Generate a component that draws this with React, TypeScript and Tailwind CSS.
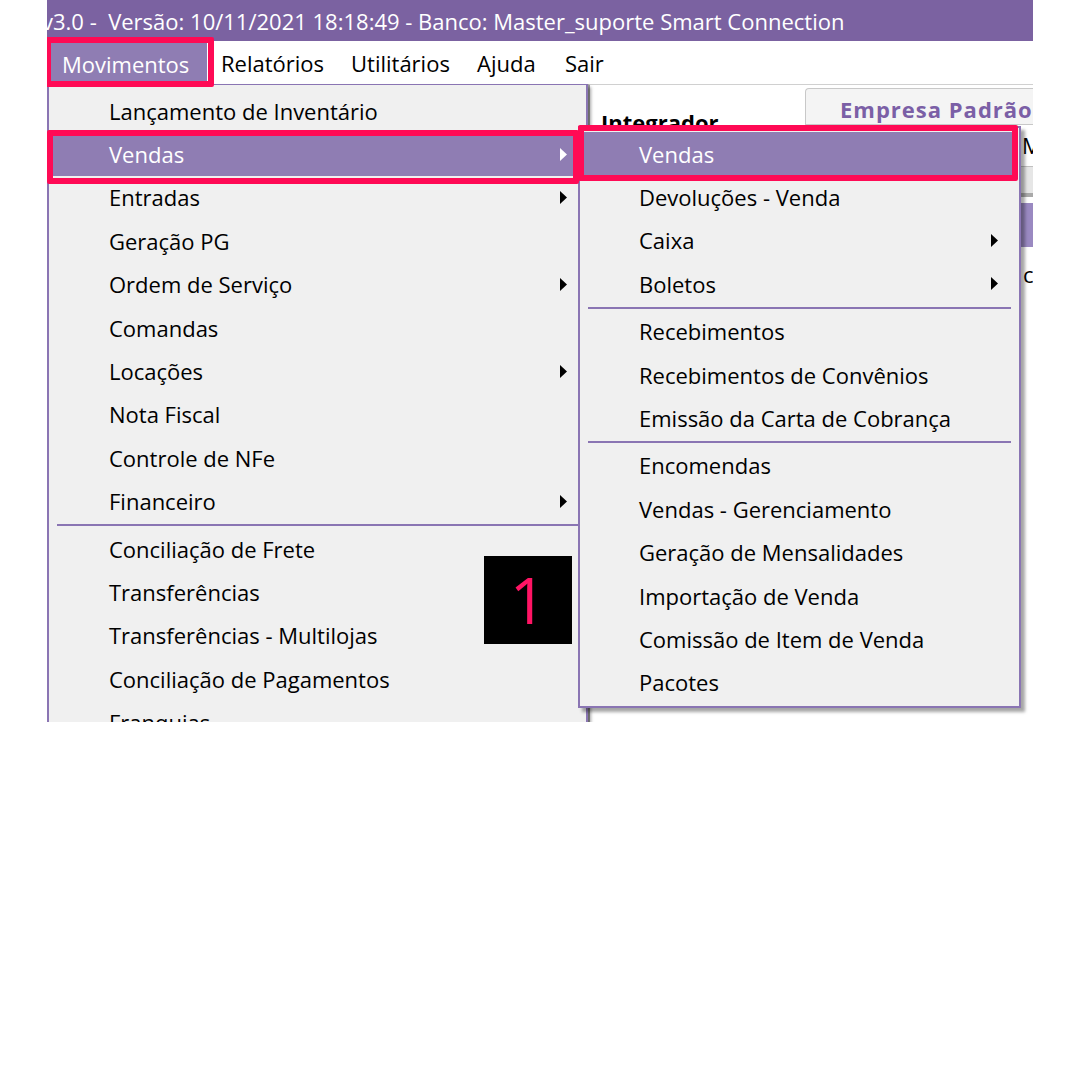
import React from "react";

const Arrow = ({ white }: { white?: boolean }) => (
  <svg width="8" height="13" viewBox="0 0 8 13" className="shrink-0">
    <path d="M0 0 L7 6.5 L0 13 Z" fill={white ? "#ffffff" : "#000000"} />
  </svg>
);

type Item = { label: string; arrow?: boolean; active?: boolean } | "sep";

const leftItems: Item[] = [
  { label: "Lançamento de Inventário" },
  { label: "Vendas", arrow: true, active: true },
  { label: "Entradas", arrow: true },
  { label: "Geração PG" },
  { label: "Ordem de Serviço", arrow: true },
  { label: "Comandas" },
  { label: "Locações", arrow: true },
  { label: "Nota Fiscal" },
  { label: "Controle de NFe" },
  { label: "Financeiro", arrow: true },
  "sep",
  { label: "Conciliação de Frete" },
  { label: "Transferências" },
  { label: "Transferências - Multilojas" },
  { label: "Conciliação de Pagamentos" },
  { label: "Franquias" },
];

const subItems: Item[] = [
  { label: "Vendas", active: true },
  { label: "Devoluções - Venda" },
  { label: "Caixa", arrow: true },
  { label: "Boletos", arrow: true },
  "sep",
  { label: "Recebimentos" },
  { label: "Recebimentos de Convênios" },
  { label: "Emissão da Carta de Cobrança" },
  "sep",
  { label: "Encomendas" },
  { label: "Vendas - Gerenciamento" },
  { label: "Geração de Mensalidades" },
  { label: "Importação de Venda" },
  { label: "Comissão de Item de Venda" },
  { label: "Pacotes" },
];

function MenuRows({ items, textLeft, arrowRight }: { items: Item[]; textLeft: string; arrowRight: string }) {
  return (
    <>
      {items.map((it, i) =>
        it === "sep" ? (
          <div key={i} className="h-[4px] flex items-center px-[8px]">
            <div className="h-[2px] w-full bg-[#8a75b3]" />
          </div>
        ) : it.active ? (
          <div key={i} className={`h-[43.4px] mx-[3px] flex items-center bg-[#8f7db3] text-white whitespace-nowrap ${textLeft} ${arrowRight}`}>
            <span className="flex-1">{it.label}</span>
            {it.arrow && <Arrow white />}
          </div>
        ) : (
          <div key={i} className={`h-[43.4px] mx-[3px] flex items-center text-black whitespace-nowrap ${textLeft} ${arrowRight}`}>
            <span className="flex-1">{it.label}</span>
            {it.arrow && <Arrow />}
          </div>
        )
      )}
    </>
  );
}

export default function App() {
  return (
    <div className="w-[1080px] h-[1080px] bg-white font-['Open_Sans',sans-serif] text-[22px]">
      <div className="ml-[47px] w-[986px] h-[722px] overflow-hidden relative bg-white">
        {/* Title bar */}
        <div className="h-[41px] bg-[#7b62a1] text-white flex items-center whitespace-pre -ml-[5px] leading-none">
          v3.0 -  Versão: 10/11/2021 18:18:49 - Banco: Master_suporte Smart Connection
        </div>
        {/* Menu bar */}
        <div className="h-[43px] bg-white flex items-stretch leading-none whitespace-nowrap">
          <div className="ml-[3px] w-[157px] pl-[12px] mt-[2px] bg-[#8f7db3] text-white flex items-center">Movimentos</div>
          <div className="w-[130px] pl-[14px] flex items-center text-black">Relatórios</div>
          <div className="w-[126px] pl-[14px] flex items-center text-black">Utilitários</div>
          <div className="w-[88px] pl-[14px] flex items-center text-black">Ajuda</div>
          <div className="w-[60px] pl-[14px] flex items-center text-black">Sair</div>
        </div>
        {/* Background window */}
        <div className="flex h-[638px]">
          <div className="w-[541px] shrink-0 bg-[#f0f0f0]" />
          <div className="flex-1 min-w-0 border-t border-[#d0d0d0] border-l-2 border-l-[#a0a0a0] bg-white flex flex-col">
            <div className="h-[40px] flex">
              <div className="pl-[11px] pt-[26px] font-bold text-[22px] leading-none text-black whitespace-nowrap">Integrador</div>
              <div className="ml-auto mt-[3px] w-[228px] shrink-0 h-[37px] rounded-tl-[4px] border border-[#c8c8c8] border-r-0 bg-[#f4f4f4] pl-[34px] pt-[9px] font-bold text-[22px] leading-none text-[#7b5fa6] tracking-[1px] whitespace-nowrap overflow-hidden">
                Empresa Padrão
              </div>
            </div>
            <div className="h-[42px] border-b border-[#c0c0c0] pl-[432px] pt-[9px] text-black whitespace-nowrap overflow-hidden leading-none">Master</div>
            <div className="h-[30px] bg-[#e6e6e6] border-b-[4px] border-[#a9a9a9]" />
            <div className="h-[6px]" />
            <div className="h-[44px] bg-[#9a89c1]" />
            <div className="h-[50px] pl-[433px] pt-[16px] text-black whitespace-nowrap overflow-hidden leading-none">cód</div>
          </div>
        </div>

        {/* Left dropdown menu */}
        <div className="absolute left-0 top-[84px] w-[541px] h-[660px] bg-[#f0f0f0] border-l-2 border-t border-r-2 border-[#8a75b3] pt-[4px] leading-none shadow-[3px_3px_3px_rgba(0,0,0,0.35)]">
          <MenuRows items={leftItems} textLeft="pl-[57px]" arrowRight="pr-[15px]" />
        </div>

        {/* Submenu */}
        <div className="absolute left-[531px] top-[126px] w-[443px] bg-[#f0f0f0] border-2 border-[#8a75b3] pt-[4px] pb-[2px] leading-none shadow-[4px_4px_3px_rgba(0,0,0,0.35)]">
          <MenuRows items={subItems} textLeft="pl-[56px]" arrowRight="pr-[17px]" />
        </div>

        {/* Red annotation boxes */}
        <div className="absolute left-[-2px] top-[37px] w-[169px] h-[50px] border-[6px] border-[#ff0a55] rounded-[2px]" />
        <div className="absolute left-[0px] top-[130px] w-[532px] h-[54px] border-[6px] border-[#ff0a55] rounded-[2px]" />
        <div className="absolute left-[531px] top-[125px] w-[440px] h-[56px] border-[6px] border-[#ff0a55] rounded-[2px]" />

        {/* Step badge */}
        <div className="absolute left-[437px] top-[556px] w-[88px] h-[88px] bg-black flex items-center justify-center text-[#ff1464] text-[64px] leading-none">
          1
        </div>
      </div>
    </div>
  );
}
